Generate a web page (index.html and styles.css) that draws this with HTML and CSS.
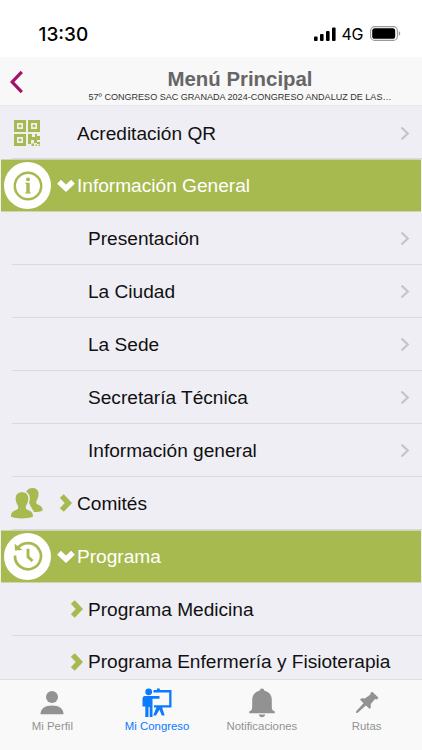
FILE: index.html
```html
<!DOCTYPE html>
<html lang="es">
<head>
    <meta charset="UTF-8">
    <meta name="viewport" content="width=device-width, initial-scale=1.0">
    <title>Menú Principal</title>
    <link rel="stylesheet" href="styles.css">
</head>
<body>
    <div class="status-bar">
        <span class="time">13:30</span>
        <div class="status-icons">
            <svg class="signal" width="22" height="14" viewBox="0 0 22 14">
                <rect x="0" y="9.5" width="3.6" height="4.5" rx="1"/>
                <rect x="6" y="7" width="3.6" height="7" rx="1"/>
                <rect x="12" y="4" width="3.6" height="10" rx="1"/>
                <rect x="18" y="0.5" width="3.6" height="13.5" rx="1"/>
            </svg>
            <span class="network">4G</span>
            <svg class="battery" width="31" height="15" viewBox="0 0 31 15">
                <rect x="0.6" y="0.6" width="26.8" height="13.8" rx="4" fill="none" stroke="#999" stroke-width="1.1"/>
                <rect x="2.2" y="2.2" width="23" height="10.6" rx="2.6"/>
                <path d="M28.8 5.2c1.9.6 1.9 4 0 4.6z" fill="#999"/>
            </svg>
        </div>
    </div>

    <header>
        <a href="#" class="back">
            <svg width="14" height="24" viewBox="0 0 14 24"><path d="M11.8 1.8 2.2 12l9.6 10.2" fill="none" stroke="#a3116b" stroke-width="3.2"/></svg>
        </a>
        <div class="titles">
            <h1>Menú Principal</h1>
            <p>57º CONGRESO SAC GRANADA 2024-CONGRESO ANDALUZ DE LAS…</p>
        </div>
    </header>

    <ul class="menu">
        <li class="item">
            <span class="icon">
                <svg width="26" height="26" viewBox="0 0 26 26" fill="#a7ba50">
                    <path fill-rule="evenodd" d="M0 0h12v12H0zM3 3v6h6V3zM14 0h12v12H14zM17 3v6h6V3zM0 14h12v12H0zM3 17v6h6v-6z"/>
                    <path d="M4.7 4.7h2.6v2.6H4.7zM18.7 4.7h2.6v2.6h-2.6zM4.7 18.7h2.6v2.6H4.7zM14 14h4v3h3v-3h2v2h3v4h-3v3h-3v-3h-3v4h-3zM17.5 23.5H20V26h-2.500zM23 22h3v2h-3zM21.500 24.500H23V26h-1.500zM24.500 24.500H26V26h-1.500z"/>
                </svg>
            </span>
            <span class="toggle"></span>
            <span class="label">Acreditación QR</span>
            <svg class="chevron" width="10" height="15" viewBox="0 0 10 15"><path d="m1.5 1.5 6.3 6-6.3 6"/></svg>
        </li>
        <li class="item open">
            <span class="icon round">
                <svg width="32" height="32" viewBox="0 0 32 32">
                    <circle cx="16" cy="16" r="13.2" fill="none" stroke="#a7ba50" stroke-width="2.5"/>
                    <circle cx="16" cy="9.4" r="1.9" fill="#a7ba50"/>
                    <path d="M13.4 12.8h4.300v9.600h1.300v1.200h-6v-1.200h1.300v-8.400h-.9z" fill="#a7ba50"/>
                </svg>
            </span>
            <span class="toggle"><svg width="18" height="13" viewBox="0 0 18 13"><path d="m2 2.800 7 6.500 7-6.500" fill="none" stroke="#fff" stroke-width="5.400"/></svg></span>
            <span class="label">Información General</span>
        </li>
        <li class="item sub"><span class="label">Presentación</span><svg class="chevron" width="10" height="15" viewBox="0 0 10 15"><path d="m1.5 1.5 6.3 6-6.3 6"/></svg></li>
        <li class="item sub"><span class="label">La Ciudad</span><svg class="chevron" width="10" height="15" viewBox="0 0 10 15"><path d="m1.5 1.5 6.3 6-6.3 6"/></svg></li>
        <li class="item sub"><span class="label">La Sede</span><svg class="chevron" width="10" height="15" viewBox="0 0 10 15"><path d="m1.5 1.5 6.3 6-6.3 6"/></svg></li>
        <li class="item sub"><span class="label">Secretaría Técnica</span><svg class="chevron" width="10" height="15" viewBox="0 0 10 15"><path d="m1.5 1.5 6.3 6-6.3 6"/></svg></li>
        <li class="item sub"><span class="label">Información general</span><svg class="chevron" width="10" height="15" viewBox="0 0 10 15"><path d="m1.5 1.5 6.3 6-6.3 6"/></svg></li>
        <li class="item">
            <span class="icon">
                <svg width="32" height="31" viewBox="0 0 32 31" fill="#a7ba50">
                    <path d="M21.5 0c4.300 0 6.300 2.800 6 6.800-.2 2.600-1 4.300-2 6-.8 1.800-.2 3.100 1.800 4 2.800 1.100 4.200 2.400 4.400 5.700-2 1-5 1.600-8.700 1.600L14 8c.5-5 3-8 7.500-8z"/>
                    <path d="M11 4.200c4.500 0 6.700 2.900 6.300 7.300-.2 2.600-1.100 4.400-2.200 6-.8 2.200-.1 3.700 1.900 4.600 3.200 1.300 4.900 2.400 5 6.700-6.300 2.300-15.700 2.300-22 0 .1-4.300 1.800-5.400 5-6.700 2-.9 2.700-2.400 1.900-4.600-1.100-1.600-2-3.400-2.200-6-.4-4.400 1.800-7.300 6.300-7.300z" stroke="#efeef4" stroke-width="3" paint-order="stroke"/>
                </svg>
            </span>
            <span class="toggle"><svg width="13" height="18" viewBox="0 0 13 18"><path d="m2.8 2 6.5 7-6.5 7" fill="none" stroke="#a7ba50" stroke-width="5.4"/></svg></span>
            <span class="label">Comités</span>
        </li>
        <li class="item open">
            <span class="icon round">
                <svg width="32" height="32" viewBox="0 0 32 32" fill="none" stroke="#a7ba50">
                    <path d="M5.300 8.800A13 13 0 1 1 3 15.500" stroke-width="2.700"/>
                    <path d="M2.600 3.800 3 10.600l7.600-.6z" fill="#a7ba50" stroke="none"/>
                    <path d="M16 8.800v8l4.500 4.200" stroke-width="2.900"/>
                </svg>
            </span>
            <span class="toggle"><svg width="18" height="13" viewBox="0 0 18 13"><path d="m2 2.800 7 6.500 7-6.500" fill="none" stroke="#fff" stroke-width="5.400"/></svg></span>
            <span class="label">Programa</span>
        </li>
        <li class="item sub">
            <span class="toggle"><svg width="13" height="18" viewBox="0 0 13 18"><path d="m2.8 2 6.5 7-6.5 7" fill="none" stroke="#a7ba50" stroke-width="5.4"/></svg></span>
            <span class="label">Programa Medicina</span>
        </li>
        <li class="item sub">
            <span class="toggle"><svg width="13" height="18" viewBox="0 0 13 18"><path d="m2.8 2 6.5 7-6.5 7" fill="none" stroke="#a7ba50" stroke-width="5.4"/></svg></span>
            <span class="label">Programa Enfermería y Fisioterapia</span>
        </li>
    </ul>

    <nav>
        <a href="#">
            <svg width="30" height="30" viewBox="0 0 30 30" fill="currentColor"><circle cx="15" cy="9" r="6"/><path d="M3.5 26.3c0-6 4.5-8.8 11.5-8.8s11.5 2.8 11.5 8.8z"/></svg>
            <span>Mi Perfil</span>
        </a>
        <a href="#" class="active">
            <svg width="30" height="30" viewBox="0 0 30 30" fill="currentColor">
                <circle cx="6.7" cy="3.8" r="3.4"/>
                <path d="M3 8h14.5v2.7h-7V29H7.7V19H6.500v10H3.300V18.500H.5V11C.5 9 1.300 8 3 8z"/>
                <path d="M11.500 2H15V.5h2.800V2h11.700v17.500H12v-2.200h15.200V4.400H11.500z"/>
                <path d="M14.600 19h5.400l2.600 8.500h-2.800l-2.300-5.700-3.500 5.700h-2.800z"/>
            </svg>
            <span>Mi Congreso</span>
        </a>
        <a href="#">
            <svg width="30" height="30" viewBox="0 0 30 30" fill="currentColor"><path d="M15 .4c1.500 0 2.300 1 2.400 2.300 5 1.200 7.400 4.400 7.400 9.300v7c0 2.500.8 3.800 3 4.400v1.900H2.200v-1.900c2.200-.6 3-1.900 3-4.400v-7c0-4.900 2.400-8.100 7.400-9.300C12.700 1.400 13.500.4 15 .4zM11.800 26.500h6.400c-.5 3.600-5.900 3.600-6.400 0z"/></svg>
            <span>Notificaciones</span>
        </a>
        <a href="#">
            <svg width="30" height="30" viewBox="0 0 30 30" fill="currentColor"><path d="m20.300 3.800 6.200 6-1.400 1.600-2.100-.3-4.400 5.200c.5 1.800.3 3.300-.8 4.700l-3.900-3.500-8.200 7.300-1.700.3.200-1.800 7.300-8-3.500-3.900c1.300-1.100 2.900-1.400 4.800-.9l5.700-4.100-.2-1.400z"/></svg>
            <span>Rutas</span>
        </a>
    </nav>
</body>
</html>
```
FILE: styles.css
```css
body {
    margin: 0;
    height: 750px;
    display: flex;
    flex-direction: column;
    overflow: hidden;
    background: #fff;
    color: #111;
    font-family: "Liberation Sans", Arial, sans-serif;
}

.status-bar {
    height: 57px;
    flex: none;
    display: flex;
    justify-content: space-between;
    align-items: center;
    padding: 10px 21px 0 38.5px;
    box-sizing: border-box;
    color: #000;
}

.time {
    font: 500 19px Inter, sans-serif;
    padding-top: 1px;
}

.status-icons {
    display: flex;
    align-items: center;
}

.network {
    font: 400 16px Inter, sans-serif;
    letter-spacing: -0.4px;
    margin: 1px 7px 0 6px;
}

header {
    height: 49px;
    flex: none;
    display: flex;
    background: #f8f8f8;
    border-bottom: 1px solid #e9e8ec;
    box-sizing: border-box;
}

.back {
    width: 88px;
    padding: 13px 0 0 10px;
    box-sizing: border-box;
}

.titles {
    width: 304px;
    text-align: center;
}

h1 {
    margin: 10px 0 0;
    font-size: 20.4px;
    line-height: 25px;
    color: #666;
}

.titles p {
    margin: 0;
    font-size: 9.05px;
    line-height: 11px;
    white-space: nowrap;
    color: #333;
}

.menu {
    list-style: none;
    margin: 0;
    padding: 0.6px 0 0;
    flex: 1;
    min-height: 0;
    overflow: hidden;
    background: #efeef4;
}

.item {
    height: 52.9px;
    display: flex;
    align-items: center;
    padding-right: 12px;
    box-sizing: border-box;
    font-size: 19.1px;
    background: linear-gradient(#d9d8de, #d9d8de) 12px 100% / 100% 1px no-repeat;
}

.item.open {
    margin: 0 1px;
    background: #a7ba50;
    border-top: 1px solid #d0d5b0;
    border-bottom: 1px solid #d0d5b0;
    color: #fff;
}

.icon {
    width: 54px;
    display: flex;
    justify-content: center;
    flex: none;
}

.icon.round {
    width: 47px;
    height: 47px;
    align-items: center;
    margin: 0 3px;
    border-radius: 50%;
    background: #fff;
}

.toggle {
    width: 23px;
    display: flex;
    justify-content: center;
    flex: none;
}

.label {
    flex: 1;
    white-space: nowrap;
    padding-top: 1px;
}

.sub .label {
    padding-left: 88px;
}

.sub .toggle {
    margin-left: 65px;
}

.sub .toggle + .label {
    padding-left: 0;
}

.chevron path {
    fill: none;
    stroke: #c5c4ca;
    stroke-width: 2.2;
}

nav {
    height: 71px;
    flex: none;
    display: flex;
    box-sizing: border-box;
    padding-right: 3px;
    border-top: 1px solid #dddde0;
    background: #f9f9f9;
}

nav a {
    flex: 1;
    display: flex;
    flex-direction: column;
    align-items: center;
    padding-top: 8px;
    color: #929292;
    text-decoration: none;
    font-size: 11.4px;
}

nav a span {
    margin-top: 1.500px;
}

nav a.active {
    color: #0a7aff;
}
```
